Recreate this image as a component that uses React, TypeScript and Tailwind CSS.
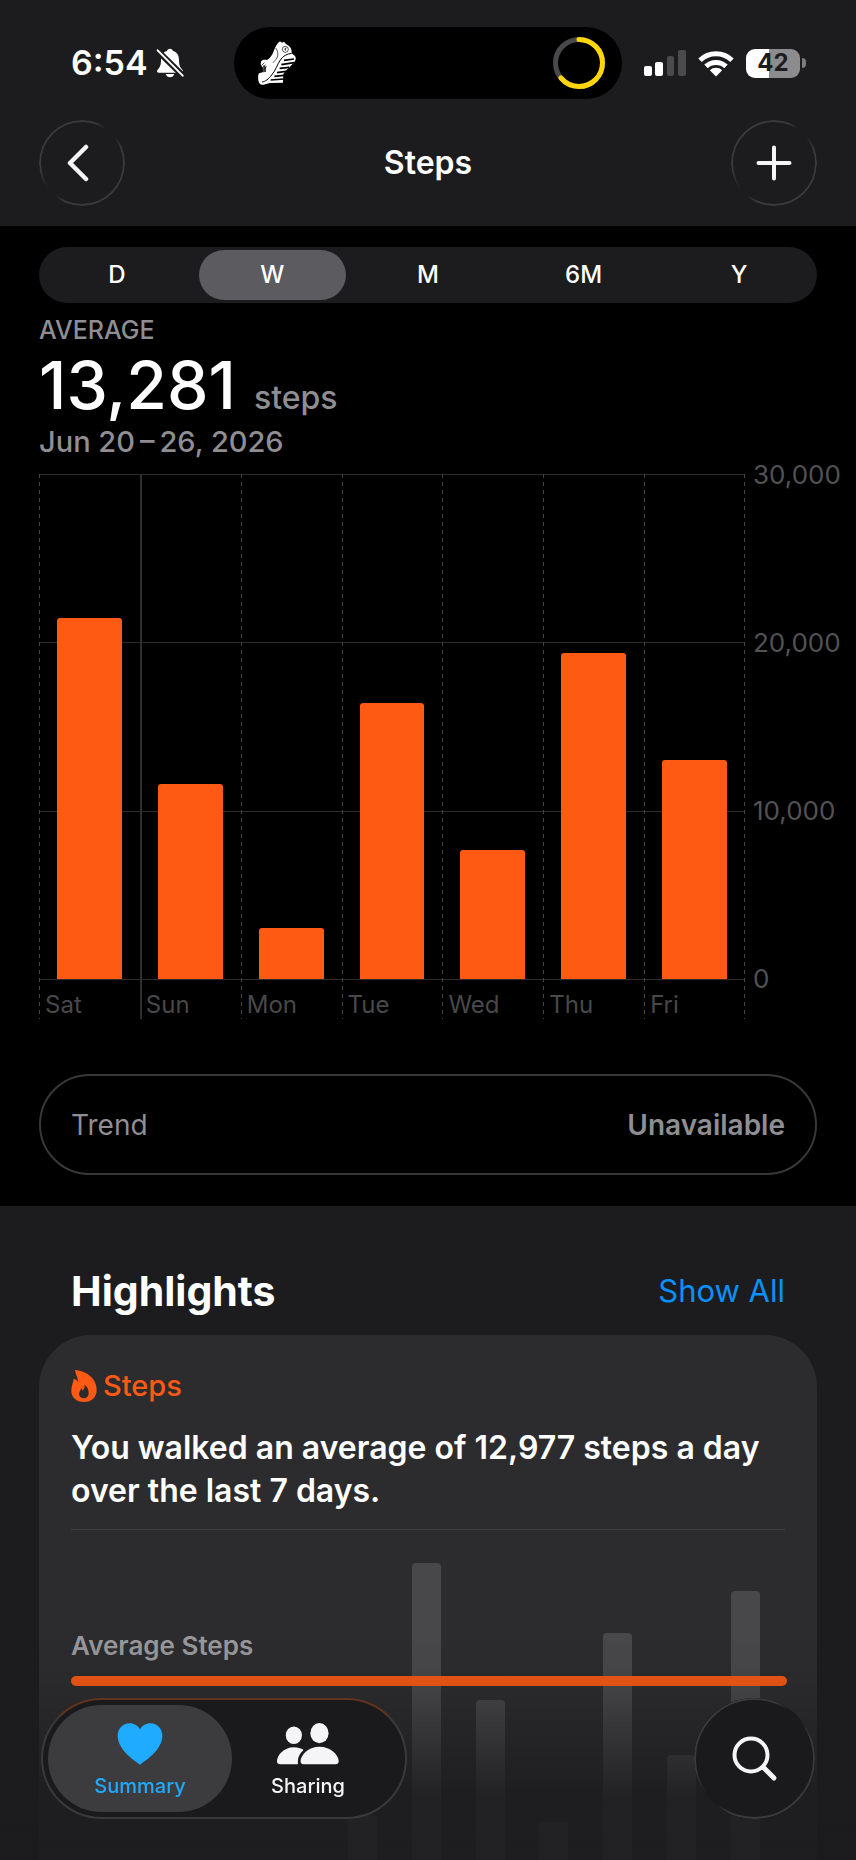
import { useState } from "react";

const ranges = ["D", "W", "M", "6M", "Y"];

const week = [
  { day: "Sat", steps: 21446 },
  { day: "Sun", steps: 11566 },
  { day: "Mon", steps: 3048 },
  { day: "Tue", steps: 16426 },
  { day: "Wed", steps: 7651 },
  { day: "Thu", steps: 19384 },
  { day: "Fri", steps: 13028 },
];

const ticks = ["30,000", "20,000", "10,000", "0"];
const maxSteps = 30000;

const trendBars = [45, 297, 160, 38, 227, 105, 269];

const dashed = "bg-[repeating-linear-gradient(to_bottom,#424244_0_4px,transparent_4px_8px)]";

function ShoeIcon() {
  return (
    <svg width="38" height="44" viewBox="0 0 114 132" aria-hidden="true">
      <path
        fill="#fff"
        d="M60 6l6-5 6 4 6-3 5 6 9 6c7 5 10 13 9 23l9 7c4 4 4 9 2 14-3 8-12 15-20 23-8 7-13 12-16 19l-1 25-39 1-20 5c-8 2-14-4-15-13C0 108 0 102 3 97l11-3c2-5 1-10 0-15-5-4-7-10-5-17 3-6 10-7 17-5 6-2 12-8 17-17 5-10 8-24 17-34z"
      />
      <g fill="none" stroke="#000">
        <path strokeWidth="3" d="M101 37c-14 1-27 9-34 20-10 15-14 31-26 45-9 12-19 20-29 21" />
        <path strokeWidth="2" d="M53 21c5 6 8 16 6 24-2 9-9 14-14 20M10 74l9-9M14 80l9-9M18 86l8-10" />
        <circle cx="82" cy="25" r="9" strokeWidth="2" />
        <path strokeWidth="3" d="M85 21c-5 0-6 6-1 7" />
        <path strokeWidth="5" d="M108 54L78 58M108 65L70 71M94 79L65 82M84 91L57 95M78 103L49 106M78 114L38 117" />
      </g>
      <path fill="#000" d="M16 73c5 0 8 3 8 9v11l-9 1z" opacity=".75" />
    </svg>
  );
}

function BellOffIcon() {
  return (
    <svg width="28" height="30" viewBox="0 0 84 90" aria-hidden="true">
      <path
        fill="#fff"
        d="M42 2c-5 0-8 3-9 7C20 13 15 23 15 36c0 15-3 22-10 29-4 4-2 9 4 9h66c6 0 8-5 4-9-7-7-10-14-10-29 0-13-5-23-18-27-1-4-4-7-9-7zM29 78c2 6 7 10 13 10s11-4 13-10z"
      />
      <path stroke="#1c1c1e" strokeWidth="18" d="M0 4l84 82" />
      <path stroke="#fff" strokeWidth="6" strokeLinecap="round" d="M5 7l75 76" />
    </svg>
  );
}

function StatusIcons() {
  return (
    <>
      <svg width="42" height="27" viewBox="0 0 42 27" aria-hidden="true">
        <rect x="0" y="16" width="8" height="10" rx="2" fill="#fff" />
        <rect x="11" y="12" width="8" height="14" rx="2" fill="#fff" />
        <rect x="23" y="6" width="7" height="20" rx="2" fill="#4a4a4c" />
        <rect x="34" y="0" width="8" height="26" rx="2" fill="#4a4a4c" />
      </svg>
      <svg width="36" height="27" viewBox="0 0 36 27" aria-hidden="true">
        <g fill="none" stroke="#fff" strokeWidth="5">
          <path d="M2 10.300a23 23 0 0 1 32 0" />
          <path d="M8 16.400a14.500 14.500 0 0 1 20 0" />
        </g>
        <path fill="#fff" d="M18 26.500l-6.200-6.200a9 9 0 0 1 12.400 0z" />
      </svg>
      <div className="flex items-center gap-[2px]">
        <div className="flex h-[29px] w-[54px] items-center justify-center rounded-[9px] bg-[linear-gradient(to_right,#fff_43%,#8c8c8e_43%)] text-2xl leading-none font-bold text-[#1c1c1e]">
          42
        </div>
        <div className="h-[10px] w-[4px] rounded-r-full bg-[#7c7c7e]" />
      </div>
    </>
  );
}

// Thin highlight round the glass buttons, faded at two opposite corners
function GlassRing() {
  return (
    <span className="absolute inset-0 rounded-full border-2 border-[#3a3a3c] mask-[conic-gradient(#000_20deg,transparent_35deg,transparent_50deg,#000_70deg,#000_205deg,transparent_220deg,transparent_232deg,#000_260deg)]" />
  );
}

function Header() {
  return (
    <header className="bg-[#1c1c1e] pt-[27px] pb-5">
      <div className="grid h-[72px] grid-cols-[1fr_388px_1fr] items-center">
        <div className="flex items-center gap-2 pl-[71px]">
          <span className="text-[34px] leading-10 font-semibold">6:54</span>
          <BellOffIcon />
        </div>
        <div className="flex h-full items-center justify-between rounded-full bg-black pr-[17px] pl-6">
          <ShoeIcon />
          <svg width="52" height="52" viewBox="0 0 52 52" fill="none" strokeWidth="5" aria-hidden="true">
            <circle cx="26" cy="26" r="23.500" stroke="#48484a" />
            <circle
              cx="26"
              cy="26"
              r="23.500"
              stroke="#ffd60a"
              strokeLinecap="round"
              pathLength="100"
              strokeDasharray="64 100"
              transform="rotate(-90 26 26)"
            />
          </svg>
        </div>
        <div className="flex items-center gap-3 pl-[22px]">
          <StatusIcons />
        </div>
      </div>

      <div className="mt-[21px] flex items-center justify-between px-[39px]">
        <button aria-label="Back" className="relative flex size-[86px] items-center justify-center rounded-full">
          <GlassRing />
          <svg width="22" height="38" viewBox="0 0 22 38" fill="none" className="mr-2" aria-hidden="true">
            <path d="M19 3L3 19l16 16" stroke="#f5f5f7" strokeWidth="4.500" strokeLinecap="round" strokeLinejoin="round" />
          </svg>
        </button>
        <h1 className="text-[32px] leading-10 font-semibold">Steps</h1>
        <button aria-label="Add data" className="relative flex size-[86px] items-center justify-center rounded-full">
          <GlassRing />
          <svg width="36" height="36" viewBox="0 0 36 36" fill="none" aria-hidden="true">
            <path d="M18 2.500v31M2.500 18h31" stroke="#f5f5f7" strokeWidth="4" strokeLinecap="round" />
          </svg>
        </button>
      </div>
    </header>
  );
}

function StepsChart() {
  return (
    <div className="mt-[14px] flex pl-[39px]">
      <div className="relative flex-1">
        <div className="absolute inset-x-0 top-0 flex h-[506px] flex-col justify-between">
          {ticks.map((tick) => (
            <div key={tick} className="h-px bg-[#2c2c2e]" />
          ))}
        </div>
        <div className="relative grid grid-cols-7">
          {week.map((item) => (
            <div key={item.day} className="relative">
              <div
                className={`absolute inset-y-0 left-0 ${item.day === "Sun" ? "w-[2px] bg-[#2e2e30]" : `w-px ${dashed}`}`}
              />
              <div className="flex h-[505px] items-end px-[18px]">
                <div
                  className="w-full rounded-t-[3px] bg-[#ff5a13]"
                  style={{ height: `${(item.steps / maxSteps) * 100}%` }}
                />
              </div>
              <div className="h-10 pt-2 pl-[6px] text-2xl leading-9 text-[#48484a]">{item.day}</div>
            </div>
          ))}
        </div>
        <div className={`absolute inset-y-0 right-0 w-px ${dashed}`} />
      </div>
      <div className="flex h-[506px] w-[111px] flex-col justify-between pl-2 text-[26px] text-[#525254]">
        {ticks.map((tick) => (
          <div key={tick} className="flex h-px items-center leading-8">
            {tick}
          </div>
        ))}
      </div>
    </div>
  );
}

function Highlights() {
  return (
    <section className="flex flex-1 flex-col bg-[#1c1c1e] px-[39px] pt-[57px]">
      <div className="flex items-center justify-between px-8">
        <h2 className="text-[41px] leading-[56px] font-bold">Highlights</h2>
        <a href="#highlights" className="text-[31px] leading-10 text-[#0a91f8]">
          Show All
        </a>
      </div>

      <div className="mt-4 flex flex-1 flex-col rounded-t-[52px] bg-[#2c2c2e] px-8 pt-[33px]">
        <div className="flex items-center gap-[6px] text-[29px] leading-9 font-medium text-[#ff5a13]">
          <svg width="26" height="32" viewBox="0 0 78 96" className="shrink-0" aria-hidden="true">
            <path
              fill="currentColor"
              fillRule="evenodd"
              d="M12 0c36 3 65 27 65 59 0 22-15 37-38 37C16 96 1 82 1 63c0-15 5-23 7-37 5 1 10 4 13 9-1-15-7-20-9-35zM40 44c3 10-2 13-5 18-1-3-2-5-5-7 0 6-6 10-6 18 0 7 6 12 14 12 9 0 15-6 15-15 0-13-4-20-13-26z"
            />
          </svg>
          Steps
        </div>
        <p className="mt-[22px] text-[32px] leading-[43px] font-semibold">
          You walked an average of 12,977 steps a day over the last 7 days.
        </p>
        <div className="mt-[17px] h-px bg-[#414143]" />

        <div className="relative flex min-h-[320px] flex-1 items-end justify-end">
          <div className="mr-2 grid w-[446px] grid-cols-7 items-end justify-items-center">
            {trendBars.map((height, i) => (
              <div key={i} className="w-[29px] rounded-t-[4px] bg-[#48484a]" style={{ height }} />
            ))}
          </div>
          <div className="absolute inset-x-0 top-[101px]">
            <div className="text-[26px] leading-[30px] font-semibold text-[#98989b]">Average Steps</div>
            <div className="-mr-[2px] mt-[15px] h-[10px] rounded-full bg-[#ff5a13]/95" />
          </div>
        </div>
      </div>
    </section>
  );
}

function TabBar() {
  return (
    <nav className="fixed inset-x-0 bottom-0 bg-[linear-gradient(to_bottom,#1c1c1e00,#1c1c1e18_20%,#1c1c1ed8_70%,#1c1c1ee0)] pt-[58px]">
      <div className="flex justify-between px-[41px] pb-[41px]">
        <div className="flex h-[121px] w-[366px] rounded-full border-2 border-[#3a3a3c] border-t-[#60331f] bg-[#1a1a1c] p-[5px]">
          <button className="flex w-[184px] flex-col items-center rounded-full bg-[#3c3c3e] pt-[18px] text-[#1fabff]">
            <svg width="46" height="42" viewBox="0 0 134 124" aria-hidden="true">
              <path
                fill="currentColor"
                d="M67 123C44 108 1 76 1 38 1 16 17 1 36 1c14 0 25 7 31 18C73 8 84 1 98 1c19 0 35 15 35 37 0 38-43 70-66 85z"
              />
            </svg>
            <span className="mt-[9px] text-[20px] leading-6 font-medium">Summary</span>
          </button>
          <button className="flex w-[152px] flex-col items-center rounded-full pt-[18px] text-[#f5f5f7]">
            <svg width="62" height="42" viewBox="0 0 184 124" fill="currentColor" aria-hidden="true">
              <ellipse cx="50" cy="36" rx="24" ry="26" />
              <path d="M62 122H10c-7 0-10-3-10-9 0-16 19-41 50-41 12 0 21 3 29 8-11 9-17 21-17 33z" />
              <ellipse cx="126" cy="30" rx="27" ry="30" />
              <path d="M126 70c34 0 57 25 57 43 0 6-3 9-9 9H79c-6 0-9-3-9-9 0-18 22-43 56-43z" />
            </svg>
            <span className="mt-[9px] text-[20px] leading-6 font-medium">Sharing</span>
          </button>
        </div>
        <button
          aria-label="Search"
          className="relative flex size-[121px] items-center justify-center rounded-full bg-[#1a1a1c]"
        >
          <GlassRing />
          <svg width="46" height="46" viewBox="0 0 46 46" fill="none" stroke="#f5f5f7" strokeLinecap="round" aria-hidden="true">
            <circle cx="19" cy="19" r="16.500" strokeWidth="4" />
            <path d="M31.500 31.500L42 42" strokeWidth="5" />
          </svg>
        </button>
      </div>
    </nav>
  );
}

export default function App() {
  const [range, setRange] = useState("W");

  return (
    <div className="flex min-h-screen flex-col bg-black font-['Inter',sans-serif] text-white">
      <Header />

      <main className="flex flex-1 flex-col">
        <section className="pt-[21px] pb-[31px]">
          <div className="mx-[39px] grid h-14 grid-cols-5 rounded-full bg-[#1c1c1e] py-[3px]">
            {ranges.map((item) => (
              <button
                key={item}
                onClick={() => setRange(item)}
                className={`mx-1 rounded-full text-2xl font-medium ${range === item ? "bg-[#5b5b60]" : ""}`}
              >
                {item}
              </button>
            ))}
          </div>

          <div className="mt-3 px-[39px] font-medium text-[#8e8e93]">
            <div className="text-[25px] leading-[30px]">AVERAGE</div>
            <div className="mt-1 flex h-[72px] items-baseline gap-[18px]">
              <span className="text-[66px] leading-[72px] text-white">13,281</span>
              <span className="text-[32px] leading-10">steps</span>
            </div>
            <div className="mt-[3px] text-[29px] leading-9">Jun 20&#8201;–&#8201;26, 2026</div>
          </div>

          <StepsChart />

          <div className="mx-[39px] mt-[55px] flex h-[101px] items-center justify-between rounded-full border-2 border-[#38383a] px-[30px] text-[28px] text-[#8e8e93]">
            <span>Trend</span>
            <span className="font-semibold">Unavailable</span>
          </div>
        </section>

        <Highlights />
      </main>

      <TabBar />
    </div>
  );
}
